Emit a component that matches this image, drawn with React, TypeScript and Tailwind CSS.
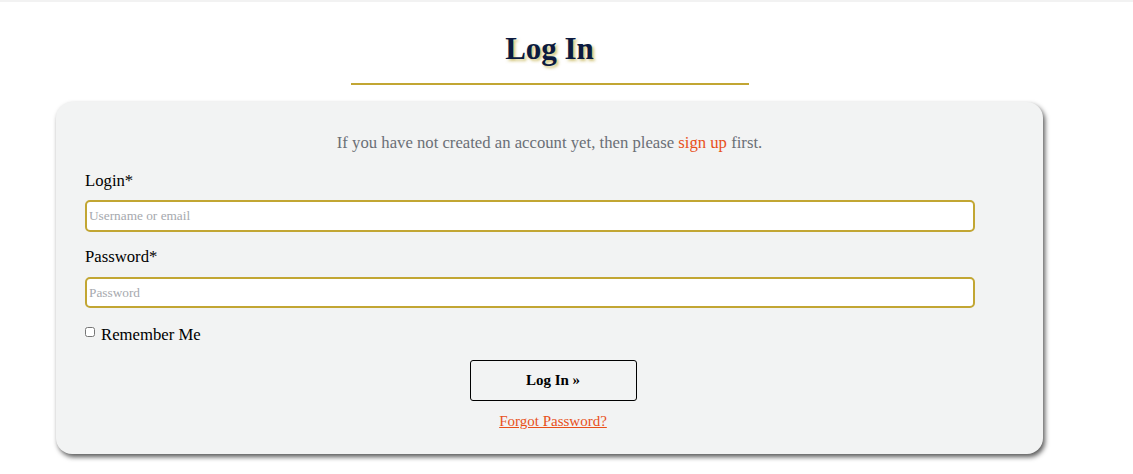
export default function App() {
  return (
    <main className="min-h-screen bg-white font-['Liberation_Serif',serif] text-black">
      <div className="h-[2px] bg-[#f2f2f2]" />
      <div className="w-[1099px]">
        <div className="flex flex-col items-center pt-[30px]">
          <h1 className="text-[31px] font-bold leading-[34px] text-[#0b1a40] [text-shadow:2px_2px_3px_rgba(190,170,60,0.7)]">
            Log In
          </h1>
          <div className="mt-[17px] h-[2px] w-[398px] bg-[#c2a633]" />
        </div>
        <div className="ml-[56px] mt-[17px] w-[987px] rounded-[16px] bg-[#f2f3f3] pb-[24px] pl-[29px] pr-[22px] pt-[30px] shadow-[2px_3px_5px_rgba(0,0,0,0.65)]">
          <p className="pr-[7px] text-center text-[16.7px] leading-[22px] text-[#6b6f76]">
            If you have not created an account yet, then please{" "}
            <a className="text-[#e8501a]">sign up</a> first.
          </p>
          <label className="mt-[17px] block text-[16.7px] leading-[20px]">Login*</label>
          <input
            className="mt-[9px] block h-[32px] w-[890px] rounded-[5px] border-2 border-[#c2a633] bg-white px-[2px] text-[13.3px] outline-none placeholder:text-[#a6a9ae]"
            placeholder="Username or email"
          />
          <label className="mt-[15px] block text-[16.7px] leading-[20px]">Password*</label>
          <input
            type="password"
            className="mt-[10px] block h-[31px] w-[890px] rounded-[5px] border-2 border-[#c2a633] bg-white px-[2px] text-[13.3px] outline-none placeholder:text-[#a6a9ae]"
            placeholder="Password"
          />
          <label className="mt-[17px] flex items-start text-[16.7px] leading-[20px]">
            <input type="checkbox" className="mr-[6px] mt-[2px] h-[10px] w-[10px]" />
            Remember Me
          </label>
          <div className="mt-[15px] flex flex-col items-center">
            <button className="h-[41px] w-[167px] rounded-[3px] border border-black text-[15px] font-bold">
              Log In »
            </button>
            <a className="mt-[11px] text-[15px] leading-[18px] text-[#e8501a] underline">
              Forgot Password?
            </a>
          </div>
        </div>
      </div>
    </main>
  );
}
